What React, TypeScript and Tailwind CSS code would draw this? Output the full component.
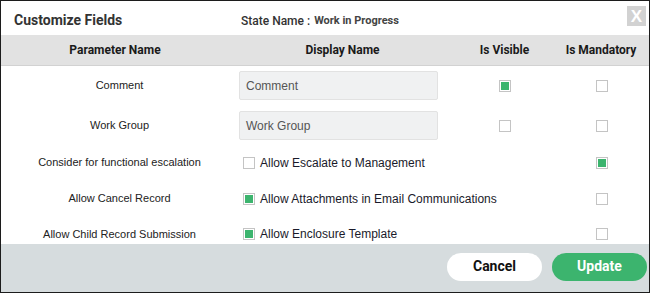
import React from "react";

const rows = [
  { label: "Comment", kind: "input", value: "Comment", visible: true, mandatory: false, h: "h-[39px]" },
  { label: "Work Group", kind: "input", value: "Work Group", visible: false, mandatory: false, h: "h-[41px]" },
  { label: "Consider for functional escalation", kind: "check", value: "Allow Escalate to Management", checked: false, mandatory: true, h: "h-[33px]" },
  { label: "Allow Cancel Record", kind: "check", value: "Allow Attachments in Email Communications", checked: true, mandatory: false, h: "h-[39px]" },
  { label: "Allow Child Record Submission", kind: "check", value: "Allow Enclosure Template", checked: true, mandatory: false, h: "h-[32px]" },
];

function Box({ on }: { on?: boolean }) {
  return (
    <span className="inline-flex w-[12px] h-[12px] border border-[#c4c4c4] bg-white p-[1px] shrink-0">
      {on && <span className="w-full h-full bg-[#3cb46e]" />}
    </span>
  );
}

export default function App() {
  return (
    <div className="w-[652px] h-[293px] bg-white">
      <div className="w-[650px] h-[293px] border border-[#1c1c1c] flex flex-col font-['Roboto',sans-serif] overflow-hidden">
        {/* header */}
        <div className="h-[34px] flex items-start pl-[13px] pr-[3px] shrink-0">
          <span className="mt-[9px] w-[227px] text-[14px] font-bold text-[#333]">Customize Fields</span>
          <span className="mt-[11px] text-[12px] font-medium text-[#333]">State Name :</span>
          <span className="mt-[12px] ml-[4px] text-[11px] font-bold text-[#444]">Work in Progress</span>
          <span className="mt-[5px] ml-auto w-[19px] h-[20px] bg-[#d2d2d2] text-white font-bold text-[17px] leading-none flex items-center justify-center font-['Liberation_Sans',sans-serif]">
            X
          </span>
        </div>

        {/* column titles */}
        <div className="h-[31px] shrink-0 grid grid-cols-[228px_227px_97px_1fr] items-center bg-[#e2e2e2] border-b border-[#d2d2d2] text-[12px] font-bold text-[#1a1a1a]">
          <span className="text-center">Parameter Name</span>
          <span className="text-center">Display Name</span>
          <span className="text-center">Is Visible</span>
          <span className="text-center">Is Mandatory</span>
        </div>

        {/* rows */}
        <div className="flex-1 overflow-hidden">
          {rows.map((r) => (
            <div key={r.label} className={`${r.h} grid grid-cols-[228px_227px_97px_1fr] items-center`}>
              <span className="text-center pl-[9px] text-[11px] text-[#222] font-['Liberation_Sans',sans-serif]">{r.label}</span>
              {r.kind === "input" ? (
                <div className="pl-[10px]">
                  <div className="w-[199px] h-[29px] bg-[#f0f1f2] border border-[#e2e2e2] rounded-[2px] flex items-center pl-[6px] text-[12px] text-[#555] font-['Liberation_Sans',sans-serif]">
                    {r.value}
                  </div>
                </div>
              ) : (
                <div className="pl-[14px] flex items-center gap-[5px] text-[12px] text-[#1a1a2a] whitespace-nowrap font-['Liberation_Sans',sans-serif]">
                  <Box on={r.checked} />
                  <span>{r.value}</span>
                </div>
              )}
              <span className="flex justify-center">
                {r.kind === "input" && <Box on={r.visible} />}
              </span>
              <span className="flex justify-center pl-[2px]">
                <Box on={r.mandatory} />
              </span>
            </div>
          ))}
        </div>

        {/* footer */}
        <div className="h-[48px] shrink-0 bg-[#d6dcde] flex items-center justify-end gap-[10px] pr-[2px] pb-[3px]">
          <button className="w-[95px] h-[28px] rounded-full bg-white text-[14px] font-bold text-[#111]">Cancel</button>
          <button className="w-[95px] h-[28px] rounded-full bg-[#3cb46e] text-[14px] font-bold text-white">Update</button>
        </div>
      </div>
    </div>
  );
}
